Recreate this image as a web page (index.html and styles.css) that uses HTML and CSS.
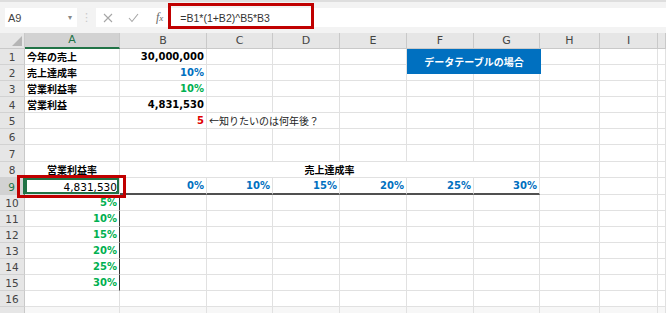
FILE: index.html
```html
<!DOCTYPE html>
<html>
<head>
  <title>データテーブルの場合</title>
  <link rel="stylesheet" href="styles.css">
</head>
<body>
  <div class="toolbar">
    <div class="namebox"><span>A9</span><span class="caret">▾</span></div>
    <div class="grip">⋮</div>
    <div class="fbar">
      <svg class="ico" width="10" height="10" viewBox="0 0 10 10"><path d="M1 1 L9 9 M9 1 L1 9" stroke="#a6a6a6" stroke-width="1.1" fill="none"/></svg>
      <svg class="ico" width="11" height="10" viewBox="0 0 11 10"><path d="M1 5 L4 8.5 L10 1" stroke="#a6a6a6" stroke-width="1.1" fill="none"/></svg>
      <span class="fx">f<small>x</small></span>
      <span class="formula">=B1*(1+B2)^B5*B3</span>
    </div>
  </div>

  <table class="sheet">
    <colgroup>
      <col class="w-rh"><col class="w-a"><col class="w-b"><col class="w-c"><col class="w-d">
      <col class="w-e"><col class="w-f"><col class="w-g"><col class="w-h"><col class="w-i"><col>
    </colgroup>
    <tr class="head">
      <td class="corner"><span class="tri"></span></td>
      <td class="ch sel">A</td><td class="ch">B</td><td class="ch">C</td><td class="ch">D</td>
      <td class="ch">E</td><td class="ch">F</td><td class="ch">G</td><td class="ch">H</td><td class="ch">I</td><td class="ch"></td>
    </tr>
    <tr>
      <td class="rh">1</td><td class="jp b">今年の売上</td><td class="num b">30,000,000</td>
      <td></td><td></td><td></td><td></td><td></td><td></td><td></td><td></td>
    </tr>
    <tr>
      <td class="rh">2</td><td class="jp b">売上達成率</td><td class="num b blue">10%</td>
      <td></td><td></td><td></td><td></td><td></td><td></td><td></td><td></td>
    </tr>
    <tr>
      <td class="rh">3</td><td class="jp b">営業利益率</td><td class="num b green">10%</td>
      <td></td><td></td><td></td><td></td><td></td><td></td><td></td><td></td>
    </tr>
    <tr>
      <td class="rh">4</td><td class="jp b">営業利益</td><td class="num b">4,831,530</td>
      <td></td><td></td><td></td><td></td><td></td><td></td><td></td><td></td>
    </tr>
    <tr>
      <td class="rh">5</td><td></td><td class="num b red">5</td>
      <td class="jp note" colspan="2">←知りたいのは何年後？</td><td></td><td></td><td></td><td></td><td></td><td></td>
    </tr>
    <tr>
      <td class="rh">6</td><td></td><td></td><td></td><td></td><td></td><td></td><td></td><td></td><td></td><td></td>
    </tr>
    <tr class="tall">
      <td class="rh">7</td><td></td><td></td><td></td><td></td><td></td><td></td><td></td><td></td><td></td><td></td>
    </tr>
    <tr>
      <td class="rh">8</td><td class="jp b mid">営業利益率</td><td class="jp b mid" colspan="6">売上達成率</td>
      <td></td><td></td><td></td>
    </tr>
    <tr class="tall">
      <td class="rh sel">9</td><td class="num active">4,831,530</td>
      <td class="num b blue under">0%</td><td class="num b blue under">10%</td><td class="num b blue under">15%</td>
      <td class="num b blue under">20%</td><td class="num b blue under">25%</td><td class="num b blue under">30%</td>
      <td></td><td></td><td></td>
    </tr>
    <tr>
      <td class="rh">10</td><td class="num b green edge">5%</td>
      <td></td><td></td><td></td><td></td><td></td><td></td><td></td><td></td><td></td>
    </tr>
    <tr>
      <td class="rh">11</td><td class="num b green edge">10%</td>
      <td></td><td></td><td></td><td></td><td></td><td></td><td></td><td></td><td></td>
    </tr>
    <tr>
      <td class="rh">12</td><td class="num b green edge">15%</td>
      <td></td><td></td><td></td><td></td><td></td><td></td><td></td><td></td><td></td>
    </tr>
    <tr>
      <td class="rh">13</td><td class="num b green edge">20%</td>
      <td></td><td></td><td></td><td></td><td></td><td></td><td></td><td></td><td></td>
    </tr>
    <tr>
      <td class="rh">14</td><td class="num b green edge">25%</td>
      <td></td><td></td><td></td><td></td><td></td><td></td><td></td><td></td><td></td>
    </tr>
    <tr>
      <td class="rh">15</td><td class="num b green edge">30%</td>
      <td></td><td></td><td></td><td></td><td></td><td></td><td></td><td></td><td></td>
    </tr>
    <tr>
      <td class="rh">16</td><td></td><td></td><td></td><td></td><td></td><td></td><td></td><td></td><td></td><td></td>
    </tr>
    <tr class="tail">
      <td class="rh"></td><td></td><td></td><td></td><td></td><td></td><td></td><td></td><td></td><td></td><td></td>
    </tr>
  </table>

  <!-- annotations drawn over the sheet -->
  <div class="callout">データテーブルの場合</div>
  <div class="redbox formula-box"></div>
  <div class="redbox cell-box"></div>
</body>
</html>
```

FILE: styles.css
```css
body {
  margin: 0;
  width: 666px;
  height: 313px;
  overflow: hidden;
  position: relative;
  background-color: #fff;
  font-family: "DejaVu Sans", "Noto Sans CJK JP", sans-serif;
  font-size: 10.5px;
  color: #000;
}

/* formula bar */
.toolbar {
  height: 33px;
  box-sizing: border-box;
  background-color: #f3f3f3;
  border-top: 2px solid #dedede;
  padding-top: 6px;
  display: flex;
  align-items: flex-start;
}

.namebox {
  margin-left: 5px;
  width: 72px;
  height: 19px;
  box-sizing: border-box;
  background-color: #fff;
  display: flex;
  align-items: center;
  justify-content: space-between;
  padding: 0 5px 0 3px;
  font-family: "Liberation Sans", sans-serif;
  font-size: 11px;
  color: #444;
}

.caret {
  font-size: 8px;
  color: #888;
}

.grip {
  width: 19px;
  text-align: center;
  color: #c8c8c8;
  font-size: 11px;
  line-height: 19px;
}

.fbar {
  flex: 1;
  height: 19px;
  background-color: #fff;
  display: flex;
  align-items: center;
  padding-left: 7px;
}

.ico {
  margin-right: 15px;
}

.fx {
  font-family: "Liberation Serif", serif;
  font-style: italic;
  font-size: 12px;
  color: #666;
  margin-left: 2px;
}

.fx small {
  font-size: 9px;
}

.formula {
  margin-left: 17px;
  font-family: "Liberation Sans", sans-serif;
  font-size: 10.5px;
  color: #333;
}

/* sheet grid */
.sheet {
  table-layout: fixed;
  width: 666px;
  border-collapse: separate;
  border-spacing: 0;
}

.w-rh { width: 25px; }
.w-a { width: 95px; }
.w-b { width: 87px; }
.w-c { width: 66px; }
.w-d { width: 67px; }
.w-e { width: 67px; }
.w-f { width: 67px; }
.w-g { width: 66px; }
.w-h { width: 60px; }
.w-i { width: 58px; }

.sheet td {
  height: 16px;
  box-sizing: border-box;
  padding: 0 2px;
  border-right: 1px solid #e1e1e1;
  border-bottom: 1px solid #e1e1e1;
  white-space: nowrap;
  line-height: 14px;
  vertical-align: bottom;
}

.sheet .tall td {
  height: 17px;
}

.sheet .head td {
  height: 16px;
  background-color: #e6e6e6;
  border-right-color: #c9c9c9;
  border-bottom: 1px solid #c9c9c9;
  text-align: center;
  vertical-align: middle;
  color: #444;
  font-size: 11px;
}

.sheet .head td.sel {
  background-color: #d2d2d2;
  color: #217346;
  border-bottom: 2px solid #217346;
}

.corner {
  position: relative;
}

.tri {
  position: absolute;
  right: 2px;
  bottom: 2px;
  width: 0;
  height: 0;
  border-left: 10px solid transparent;
  border-bottom: 10px solid #b5b5b5;
}

.sheet td.rh {
  background-color: #e6e6e6;
  border-right-color: #c9c9c9;
  border-bottom-color: #d2d2d2;
  text-align: center;
  color: #444;
  font-size: 10.5px;
}

.sheet td.rh.sel {
  background-color: #d2d2d2;
  color: #217346;
  border-right: 2px solid #217346;
}

.sheet .tail td {
  height: 6px;
  border-bottom: none;
  background-color: #f7f7f7;
}

.sheet .tail td.rh {
  background-color: #e6e6e6;
}

.jp {
  font-family: "Noto Sans CJK JP", sans-serif;
  font-size: 10px;
}

.b { font-weight: bold; }
.num { text-align: right; }
.num.b { font-size: 10px; }
.mid { text-align: center; }
.blue { color: #0070c0; }
.green { color: #00b050; }
.red { color: #e00000; }

.note {
  padding-left: 1px;
  color: #222;
}

.sheet td.under {
  border-bottom: 2px solid #505050;
}

.sheet td.edge {
  border-right: 1px solid #333;
}

.sheet td.active {
  position: relative;
  box-shadow: inset 0 0 0 2px #217346;
}

.sheet td.active::after {
  content: "";
  position: absolute;
  right: 0;
  bottom: 0;
  width: 3px;
  height: 3px;
  background-color: #217346;
}

/* overlays */
.callout {
  position: absolute;
  left: 407px;
  top: 49px;
  width: 134px;
  height: 25px;
  background-color: #0070c0;
  color: #fff;
  font-family: "Noto Sans CJK JP", sans-serif;
  font-weight: bold;
  font-size: 10px;
  display: flex;
  align-items: center;
  justify-content: center;
}

.redbox {
  position: absolute;
  box-sizing: border-box;
  border: 3px solid #c00000;
}

.formula-box {
  left: 168px;
  top: 3px;
  width: 146px;
  height: 26px;
}

.cell-box {
  left: 17px;
  top: 175px;
  width: 109px;
  height: 23px;
}
```
